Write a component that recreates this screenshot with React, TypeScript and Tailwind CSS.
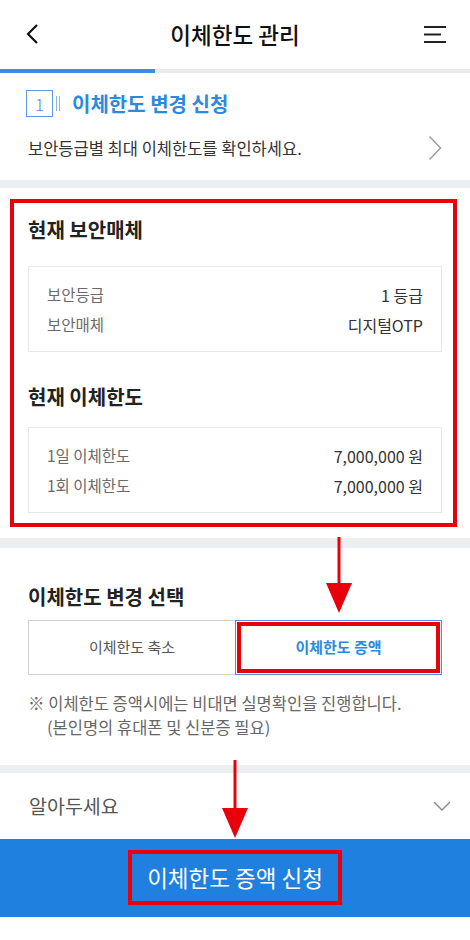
import React from 'react';

const FONT = '"Noto Sans CJK KR", "Noto Sans", sans-serif';

// red call-out arrow pointing downward
const DownArrow = ({ left, top, height }: { left: number; top: number; height: number }) => (
  <svg
    className="absolute pointer-events-none"
    style={{ left: left - 14, top }}
    width={28}
    height={height}
    viewBox={`0 0 28 ${height}`}
  >
    <line x1={14} y1={0} x2={14} y2={height - 24} stroke="#e8000b" strokeWidth={3} />
    <polygon points={`1,${height - 30} 27,${height - 30} 14,${height}`} fill="#e8000b" />
  </svg>
);

const InfoRow = ({ label, value }: { label: string; value: string }) => (
  <div className="flex items-center justify-between h-[30px]">
    <span className="text-[15.5px] text-[#6b6b6b]">{label}</span>
    <span className="text-[16px] text-[#333]">{value}</span>
  </div>
);

export default function App() {
  return (
    <div className="relative w-[470px] h-[940px] bg-white overflow-hidden" style={{ fontFamily: FONT }}>
      {/* Header */}
      <header className="h-[69px] flex items-center px-[24px]">
        <div className="w-[40px] flex">
          <svg width="18" height="22" viewBox="0 0 18 22" className="mt-[-2px]">
            <path d="M13 2 L4 11 L13 20" fill="none" stroke="#111" strokeWidth="2.2" />
          </svg>
        </div>
        <h1 className="flex-1 text-center text-[22.5px] font-medium text-[#111] leading-none mt-[-1px]">이체한도 관리</h1>
        <div className="w-[40px] flex justify-end">
          <svg width="24" height="20" viewBox="0 0 24 20" className="mr-[-2px] mt-[-2px]">
            <rect x="0" y="2" width="22" height="2" fill="#222" />
            <rect x="0" y="9.5" width="17" height="2" fill="#222" />
            <rect x="0" y="17" width="22" height="2" fill="#222" />
          </svg>
        </div>
      </header>

      {/* step progress */}
      <div className="h-[4px] bg-[#e9eaec]">
        <div className="h-full w-[155px] bg-[#3a8ee6]" />
      </div>

      {/* Step 1 */}
      <section className="px-[26px] pt-[17px] pb-[20px]">
        <div className="flex items-center h-[27px]">
          <div className="w-[27px] h-[27px] border border-[#5b9be0] flex items-center justify-center text-[17px] font-light text-[#4a8fdc] leading-none">
            1
          </div>
          <div className="ml-[3px] flex gap-[2px]">
            <div className="w-px h-[15px] bg-[#8cb6e6]" />
            <div className="w-px h-[15px] bg-[#8cb6e6]" />
          </div>
          <span className="ml-[12px] text-[20px] font-bold text-[#2b8ae0] leading-none">이체한도 변경 신청</span>
        </div>
        <div className="mt-[19px] flex items-center justify-between h-[24px] pl-[2px]">
          <span className="text-[16.5px] text-[#333]">보안등급별 최대 이체한도를 확인하세요.</span>
          <svg width="14" height="26" viewBox="0 0 14 26" className="mr-[2px]">
            <path d="M1.5 1.5 L12.5 13 L1.5 24.5" fill="none" stroke="#9a9a9a" strokeWidth="1.4" />
          </svg>
        </div>
      </section>

      <div className="h-[8px] bg-[#eceeef]" />

      {/* Current security / limits */}
      <section className="px-[28px] pt-[28px] pb-[25px]">
        <h2 className="text-[20px] font-bold text-[#222] leading-[28px]">현재 보안매체</h2>
        <div className="mt-[22px] border border-[#e8e8e8] px-[18px] pt-[13px] pb-[11px]">
          <InfoRow label="보안등급" value="1 등급" />
          <InfoRow label="보안매체" value="디지털OTP" />
        </div>
        <h2 className="mt-[31px] text-[20px] font-bold text-[#222] leading-[28px]">현재 이체한도</h2>
        <div className="mt-[16px] border border-[#e8e8e8] px-[18px] pt-[13px] pb-[11px]">
          <InfoRow label="1일 이체한도" value="7,000,000 원" />
          <InfoRow label="1회 이체한도" value="7,000,000 원" />
        </div>
      </section>

      <div className="h-[10px] bg-[#eceeef]" />

      {/* Change selection */}
      <section className="px-[28px] pt-[35px] pb-[26px]">
        <h2 className="text-[20px] font-bold text-[#222] leading-[28px]">이체한도 변경 선택</h2>
        <div className="mt-[9px] grid grid-cols-2 h-[55px]">
          <button className="border border-r-0 border-[#cfcfcf] text-[15px] text-[#555]">이체한도 축소</button>
          <button className="border border-[#4a8fe0] text-[15px] font-bold text-[#2b8ae0]">이체한도 증액</button>
        </div>
        <div className="mt-[16px] text-[16.5px] text-[#666] leading-[24px]">
          <p>※ 이체한도 증액시에는 비대면 실명확인을 진행합니다.</p>
          <p className="pl-[19px]">(본인명의 휴대폰 및 신분증 필요)</p>
        </div>
      </section>

      <div className="h-[8px] bg-[#eceeef]" />

      {/* Notice accordion */}
      <div className="h-[66px] flex items-center justify-between pl-[29px] pr-[19px]">
        <span className="text-[19.5px] text-[#555]">알아두세요</span>
        <svg width="18" height="10" viewBox="0 0 18 10">
          <path d="M1 1 L9 9 L17 1" fill="none" stroke="#8a8a8a" strokeWidth="1.4" />
        </svg>
      </div>

      <button className="w-full h-[78px] bg-[#1f80e0] text-white text-[22.5px] flex items-center justify-center">
        이체한도 증액 신청
      </button>

      {/* red call-outs */}
      <div className="absolute left-[10px] top-[199px] w-[447px] h-[328px] border-[4px] border-[#e8000b] pointer-events-none" />
      <DownArrow left={339} top={537} height={76} />
      <div className="absolute left-[237px] top-[622px] w-[203px] h-[51px] border-[4px] border-[#e8000b] pointer-events-none" />
      <DownArrow left={235} top={760} height={78} />
      <div className="absolute left-[128px] top-[850px] w-[214px] h-[55px] border-[4px] border-[#e8000b] pointer-events-none" />
    </div>
  );
}
